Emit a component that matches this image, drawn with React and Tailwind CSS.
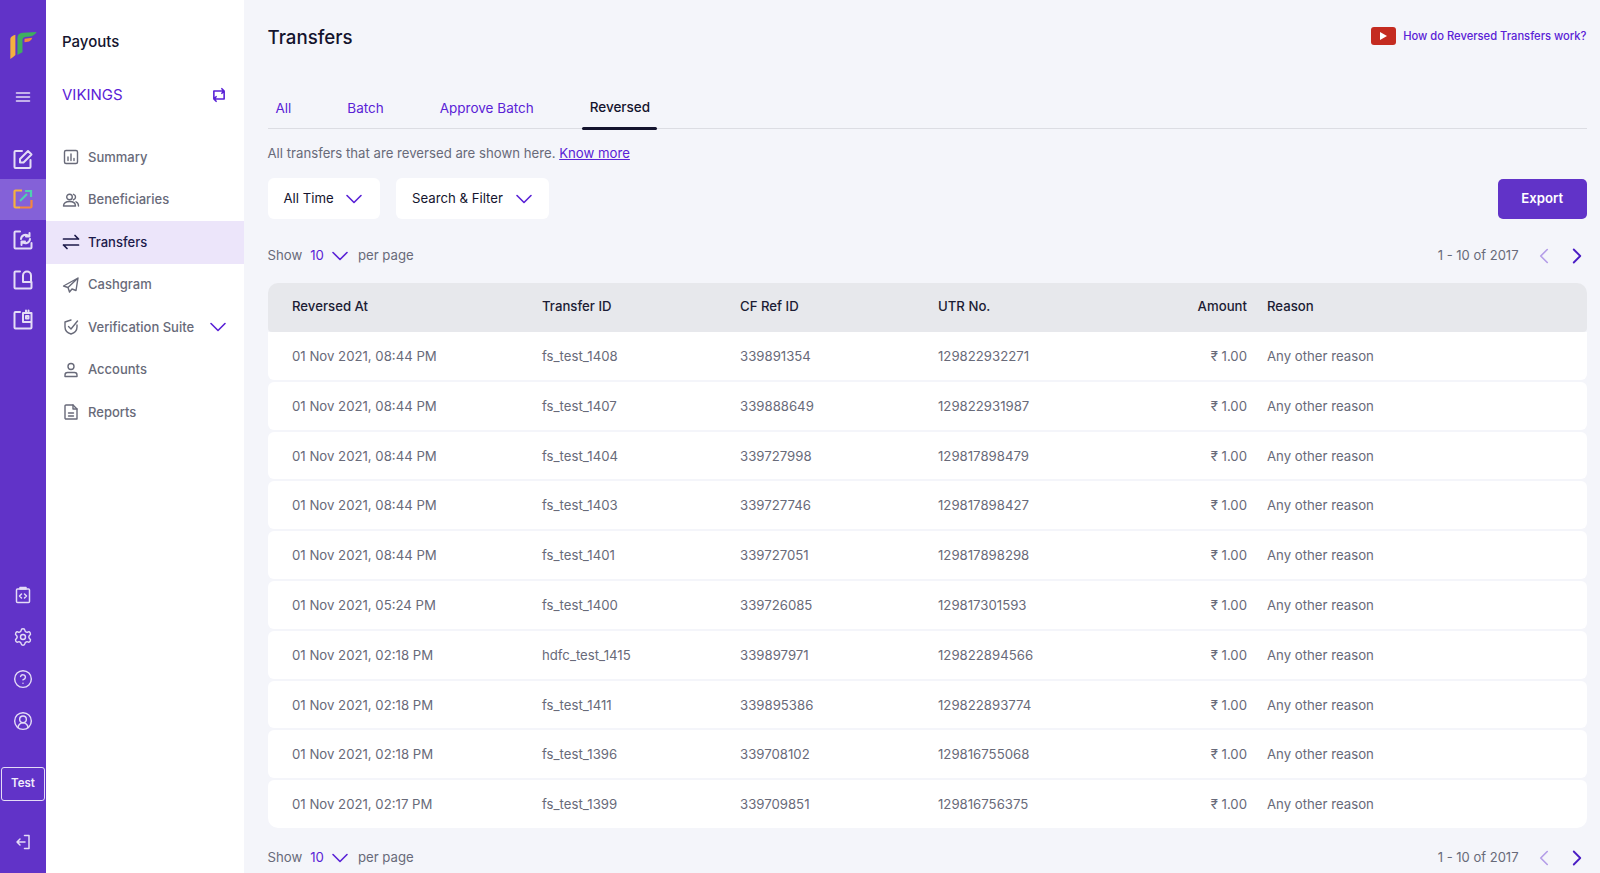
import React from 'react';
import { ChevronDown, ChevronLeft, ChevronRight, Settings, CircleHelp, CircleUserRound } from 'lucide-react';

const rows = [
  ['01 Nov 2021, 08:44 PM', 'fs_test_1408', '339891354', '129822932271'],
  ['01 Nov 2021, 08:44 PM', 'fs_test_1407', '339888649', '129822931987'],
  ['01 Nov 2021, 08:44 PM', 'fs_test_1404', '339727998', '129817898479'],
  ['01 Nov 2021, 08:44 PM', 'fs_test_1403', '339727746', '129817898427'],
  ['01 Nov 2021, 08:44 PM', 'fs_test_1401', '339727051', '129817898298'],
  ['01 Nov 2021, 05:24 PM', 'fs_test_1400', '339726085', '129817301593'],
  ['01 Nov 2021, 02:18 PM', 'hdfc_test_1415', '339897971', '129822894566'],
  ['01 Nov 2021, 02:18 PM', 'fs_test_1411', '339895386', '129822893774'],
  ['01 Nov 2021, 02:18 PM', 'fs_test_1396', '339708102', '129816755068'],
  ['01 Nov 2021, 02:17 PM', 'fs_test_1399', '339709851', '129816756375'],
];

const Svg = ({ className = 'w-[18px] h-[18px]', children, vb = '0 0 18 18', sw = 1.4 }) => (
  <svg viewBox={vb} fill="none" stroke="currentColor" strokeWidth={sw} strokeLinecap="round" strokeLinejoin="round" className={className}>
    {children}
  </svg>
);

const navItems = [
  { label: 'Summary', icon: <Svg><rect x="2.500" y="2.500" width="13" height="13" rx="1.500" /><path d="M6 12.500V9M9 12.500V6M12 12.500v-2" /></Svg> },
  { label: 'Beneficiaries', icon: <Svg><circle cx="7.500" cy="6" r="2.800" /><path d="M1.500 15c0-3 2.500-4.500 6-4.500s6 1.500 6 4.500zM11.500 3.300a2.800 2.800 0 0 1 0 5.400M14 10.800c1.500.6 2.500 2 2.500 4.200" /></Svg> },
  { label: 'Transfers', active: true, icon: <Svg sw={1.7}><path d="M1.500 6h15M13 2.500 16.500 6M16.500 12h-15M5 15.500 1.500 12" /></Svg> },
  { label: 'Cashgram', icon: <Svg><path d="M16 2 1.500 10l4.500 1.500L16 2zM6 11.500 7.500 16l2.500-3 4 1.500L16 2" /></Svg> },
  { label: 'Verification Suite', expand: true, icon: <Svg><path d="M9 2 3 4v5c0 3.500 2.500 6 6 7 3.500-1 6-3.500 6-7V7" /><path d="m6.500 8.500 2.500 2.500L15.500 3" /></Svg> },
  { label: 'Accounts', icon: <Svg><circle cx="9" cy="5.500" r="3" /><path d="M3 15.500v-1.500c0-1.500 1-2.500 2.500-2.500h7c1.500 0 2.500 1 2.500 2.500v1.500z" /></Svg> },
  { label: 'Reports', icon: <Svg><path d="M4 2h7l4 4v10H4a1 1 0 0 1-1-1V3a1 1 0 0 1 1-1z" /><path d="M11 2v4h4M6.500 10h5M6.500 13h5" /></Svg> },
];

const Rail = () => (
  <aside className="w-[46px] shrink-0 h-full bg-[#6133c8] flex flex-col items-center text-[#e4dcf6]">
    <svg viewBox="0 0 80 80" className="w-[27px] h-[27px] mt-[32px] shrink-0">
      <path d="M1 20 Q2 12 16 8 L16 68 Q8 76 1 80 Z" fill="#f4b13f" />
      <path d="M22 18 Q22 3 38 2 L79 0 Q72 12 60 13 L44 15 Q37 16 37 24 L37 60 Q30 64 22 68 Z" fill="#3fae5f" />
      <path d="M43 20 L66 17 Q62 28 52 29 L43 30 Z" fill="#f4863f" />
    </svg>
    <Svg className="w-[16px] h-[14px] mt-[31px] shrink-0" vb="0 0 16 14" sw={1.600}>
      <path d="M1.500 3h13M1.500 7h13M1.500 11h13" />
    </Svg>
    <div className="mt-[35px] h-[40.300px] flex items-center justify-center">
      <Svg className="w-[22px] h-[22px]" vb="0 0 22 22" sw={2}>
        <path d="M10 3H3.500a1 1 0 0 0-1 1v15a1 1 0 0 0 1 1h14a1 1 0 0 0 1-1v-7" /><path d="m8 11 8-8 3.500 3.500-8 8H8z" />
      </Svg>
    </div>
    <div className="w-full h-[40.300px] bg-[#8461d8] flex items-center justify-center">
      <svg viewBox="0 0 22 22" fill="none" strokeWidth="2.200" className="w-[22px] h-[22px]">
        <path d="M10 2.500H3.500a1 1 0 0 0-1 1v15a1 1 0 0 0 1 1H8" stroke="#f4b13f" />
        <path d="M8 19.500h10.500a1 1 0 0 0 1-1V12" stroke="#f4863f" />
        <path d="m8 13 7-7" stroke="#4fd0b0" />
        <path d="M13 3h6v6" stroke="#4fd0b0" />
      </svg>
    </div>
    <div className="h-[40.300px] flex items-center justify-center">
      <Svg className="w-[22px] h-[22px]" vb="0 0 22 22" sw={2}>
        <path d="M8 2.500H3.500a1 1 0 0 0-1 1v15a1 1 0 0 0 1 1h15a1 1 0 0 0 1-1V14" /><path d="M9 10a4.500 4.500 0 0 1 8-2.500M18 10a4.500 4.500 0 0 1-8 2.500M17.500 4v3.500H14M9.500 16v-3.500H13" />
      </Svg>
    </div>
    <div className="h-[40.300px] flex items-center justify-center">
      <Svg className="w-[22px] h-[22px]" vb="0 0 22 22" sw={2}>
        <path d="M8 2.500H3.500a1 1 0 0 0-1 1v15a1 1 0 0 0 1 1h15a1 1 0 0 0 1-1V13H11V6.500A4 4 0 0 1 19 6.500V13" />
      </Svg>
    </div>
    <div className="h-[40.300px] flex items-center justify-center">
      <Svg className="w-[22px] h-[22px]" vb="0 0 22 22" sw={2}>
        <path d="M8 3H3.500a1 1 0 0 0-1 1v14.500a1 1 0 0 0 1 1h15a1 1 0 0 0 1-1V4H11v9h8.500M14 4V1.500M16.500 4V1.500" /><rect x="14" y="7" width="2.500" height="2.500" />
      </Svg>
    </div>
    <div className="flex-1" />
    <div className="h-[42px] flex items-center justify-center">
      <Svg className="w-[16px] h-[18px]" vb="0 0 16 18" sw={1.500}>
        <rect x="1.500" y="3" width="13" height="13.500" rx="1" /><path d="M5 1.500h6V3H5zM6.500 8 4.500 10l2 2M9.500 8l2 2-2 2" />
      </Svg>
    </div>
    <div className="h-[42px] flex items-center justify-center"><Settings className="w-[20px] h-[20px]" strokeWidth={1.700} /></div>
    <div className="h-[42px] flex items-center justify-center"><CircleHelp className="w-[20px] h-[20px]" strokeWidth={1.700} /></div>
    <div className="h-[42px] flex items-center justify-center"><CircleUserRound className="w-[20px] h-[20px]" strokeWidth={1.700} /></div>
    <div className="mt-[25px] w-[44px] h-[34px] border border-[#e4dcf6] rounded-[3px] flex items-center justify-center text-[11.500px] font-semibold text-[#f0ecfa]">
      Test
    </div>
    <Svg className="w-[16px] h-[16px] mt-[33px] mb-[23px]" vb="0 0 16 16" sw={1.500}>
      <path d="M9.500 1.500H14v13H9.500M10 8H2M5 5 2 8l3 3" />
    </Svg>
  </aside>
);

const NavPanel = () => (
  <nav className="w-[198px] shrink-0 h-full bg-white">
    <div className="pl-[16px] pt-[33px] text-[15px] leading-[18px] font-medium text-[#14142e]">Payouts</div>
    <div className="pl-[16px] pr-[17px] mt-[33px] flex items-center justify-between text-[#5a22d6]">
      <span className="text-[15px] leading-[22px]">VIKINGS</span>
      <Svg className="w-[16px] h-[16px]" vb="0 0 14 14" sw={1.400}>
        <path d="M2.500 10.500v-7h9M9.500 1.500l2 2-2 2M11.500 3.500v7h-9M4.500 8.500l-2 2 2 2" />
      </Svg>
    </div>
    <ul className="mt-[30px]">
      {navItems.map((item) => (
        <li
          key={item.label}
          className={`h-[42.500px] flex items-center pl-[16px] pr-[18px] ${item.active ? 'bg-[#ece5fa] text-[#1c1a4a]' : 'text-[#686a79]'}`}
        >
          <span className="w-[26px] shrink-0 flex">{item.icon}</span>
          <span className="text-[13px] font-medium flex-1 whitespace-nowrap">{item.label}</span>
          {item.expand && <ChevronDown className="w-[28px] h-[28px] -mr-[6px] text-[#5a22d6]" strokeWidth={1.400} />}
        </li>
      ))}
    </ul>
  </nav>
);

const Pager = () => (
  <div className="flex items-center justify-between h-[20px]">
    <div className="flex items-center text-[13.200px] text-[#686a79]">
      <span>Show</span>
      <span className="ml-[8px] text-[#5a22d6]">10</span>
      <ChevronDown className="w-[28px] h-[28px] ml-[2px] -mr-[1px] text-[#5a22d6]" strokeWidth={1.400} />
      <span className="ml-[5px]">per page</span>
    </div>
    <div className="flex items-center text-[13px] text-[#686a79]">
      <span>1 - 10 of 2017</span>
      <ChevronLeft className="w-[26px] h-[26px] ml-[12px] text-[#b49de8]" strokeWidth={1.500} />
      <ChevronRight className="w-[26px] h-[26px] ml-[7px] -mr-[3px] text-[#4a1cc4]" strokeWidth={1.700} />
    </div>
  </div>
);

const colClass = 'grid grid-cols-[250px_198px_198px_204px_105px_1fr] items-center pl-[24.500px]';

const App = () => {
  const tabs = ['All', 'Batch', 'Approve Batch'];
  return (
    <div className="flex w-full h-[873px] overflow-hidden bg-[#f4f5fa] font-['Inter',_'Noto_Sans',_sans-serif]">
      <Rail />
      <NavPanel />
      <main className="flex-1 min-w-0 pl-[23.500px] pr-[13.500px]">
        <div className="flex items-center justify-between pt-[24px] h-[50px]">
          <h1 className="mt-[2px] text-[18.700px] font-medium leading-[26px] text-[#14142e]">Transfers</h1>
          <a className="-mt-[2px] flex items-center text-[11.200px] font-medium text-[#5a22d6]">
            <span className="w-[25px] h-[18px] rounded-[3px] bg-[#c42b20] flex items-center justify-center mr-[7px]">
              <span className="w-0 h-0 border-y-[4px] border-y-transparent border-l-[7px] border-l-white" />
            </span>
            How do Reversed Transfers work?
          </a>
        </div>

        <div className="flex items-end mt-[41px] h-[38px] border-b-[1.500px] border-[#dcdde3] text-[13.500px]">
          {tabs.map((tab, i) => (
            <span key={tab} className={`pb-[10px] text-[#5a22d6] ${i === 0 ? 'ml-[8px] mr-[56px]' : 'mr-[56px]'}`}>{tab}</span>
          ))}
          <span className="relative pb-[11px] font-medium text-[#14142e]">
            Reversed
            <span className="absolute -left-[8px] -right-[7px] -bottom-[2px] h-[3.500px] rounded-[2px] bg-[#14142e]" />
          </span>
        </div>

        <p className="mt-[14px] text-[13.200px] leading-[20px] text-[#686a79]">
          All transfers that are reversed are shown here. <span className="text-[#5a22d6] underline">Know more</span>
        </p>

        <div className="flex items-center mt-[15px]">
          <div className="w-[112.500px] h-[41px] bg-white rounded-[6px] flex items-center justify-between pl-[16px] pr-[12px] text-[13.200px] text-[#14142e]">
            All Time <ChevronDown className="w-[28px] h-[28px] text-[#5a22d6]" strokeWidth={1.400} />
          </div>
          <div className="ml-[16px] w-[153px] h-[41px] bg-white rounded-[6px] flex items-center justify-between pl-[16px] pr-[11px] text-[13.200px] text-[#14142e]">
            Search &amp; Filter <ChevronDown className="w-[28px] h-[28px] text-[#5a22d6]" strokeWidth={1.400} />
          </div>
          <button className="ml-auto w-[88.500px] h-[40px] bg-[#6133c8] rounded-[5px] text-[13.200px] font-semibold text-white">Export</button>
        </div>

        <div className="mt-[27px]"><Pager /></div>

        <div className={`${colClass} mt-[17px] h-[49px] pb-[2px] rounded-t-[10px] rounded-b-[4px] bg-[#e7e8ec] text-[13.200px] font-medium text-[#1c1c34]`}>
          <span>Reversed At</span>
          <span>Transfer ID</span>
          <span>CF Ref ID</span>
          <span>UTR No.</span>
          <span className="text-right">Amount</span>
          <span className="pl-[20px]">Reason</span>
        </div>

        <div className="flex flex-col gap-[2px]">
          {rows.map((r, i) => (
            <div
              key={r[1]}
              className={`${colClass} h-[47.800px] pt-[2px] bg-white text-[13.200px] text-[#686a79] ${i === 0 ? 'rounded-b-[6px]' : i === rows.length - 1 ? 'rounded-t-[6px] rounded-b-[10px]' : 'rounded-[6px]'}`}
            >
              <span>{r[0]}</span>
              <span>{r[1]}</span>
              <span>{r[2]}</span>
              <span>{r[3]}</span>
              <span className="text-right">₹ 1.00</span>
              <span className="pl-[20px]">Any other reason</span>
            </div>
          ))}
        </div>

        <div className="mt-[20px]"><Pager /></div>
      </main>
    </div>
  );
};

export default App;
